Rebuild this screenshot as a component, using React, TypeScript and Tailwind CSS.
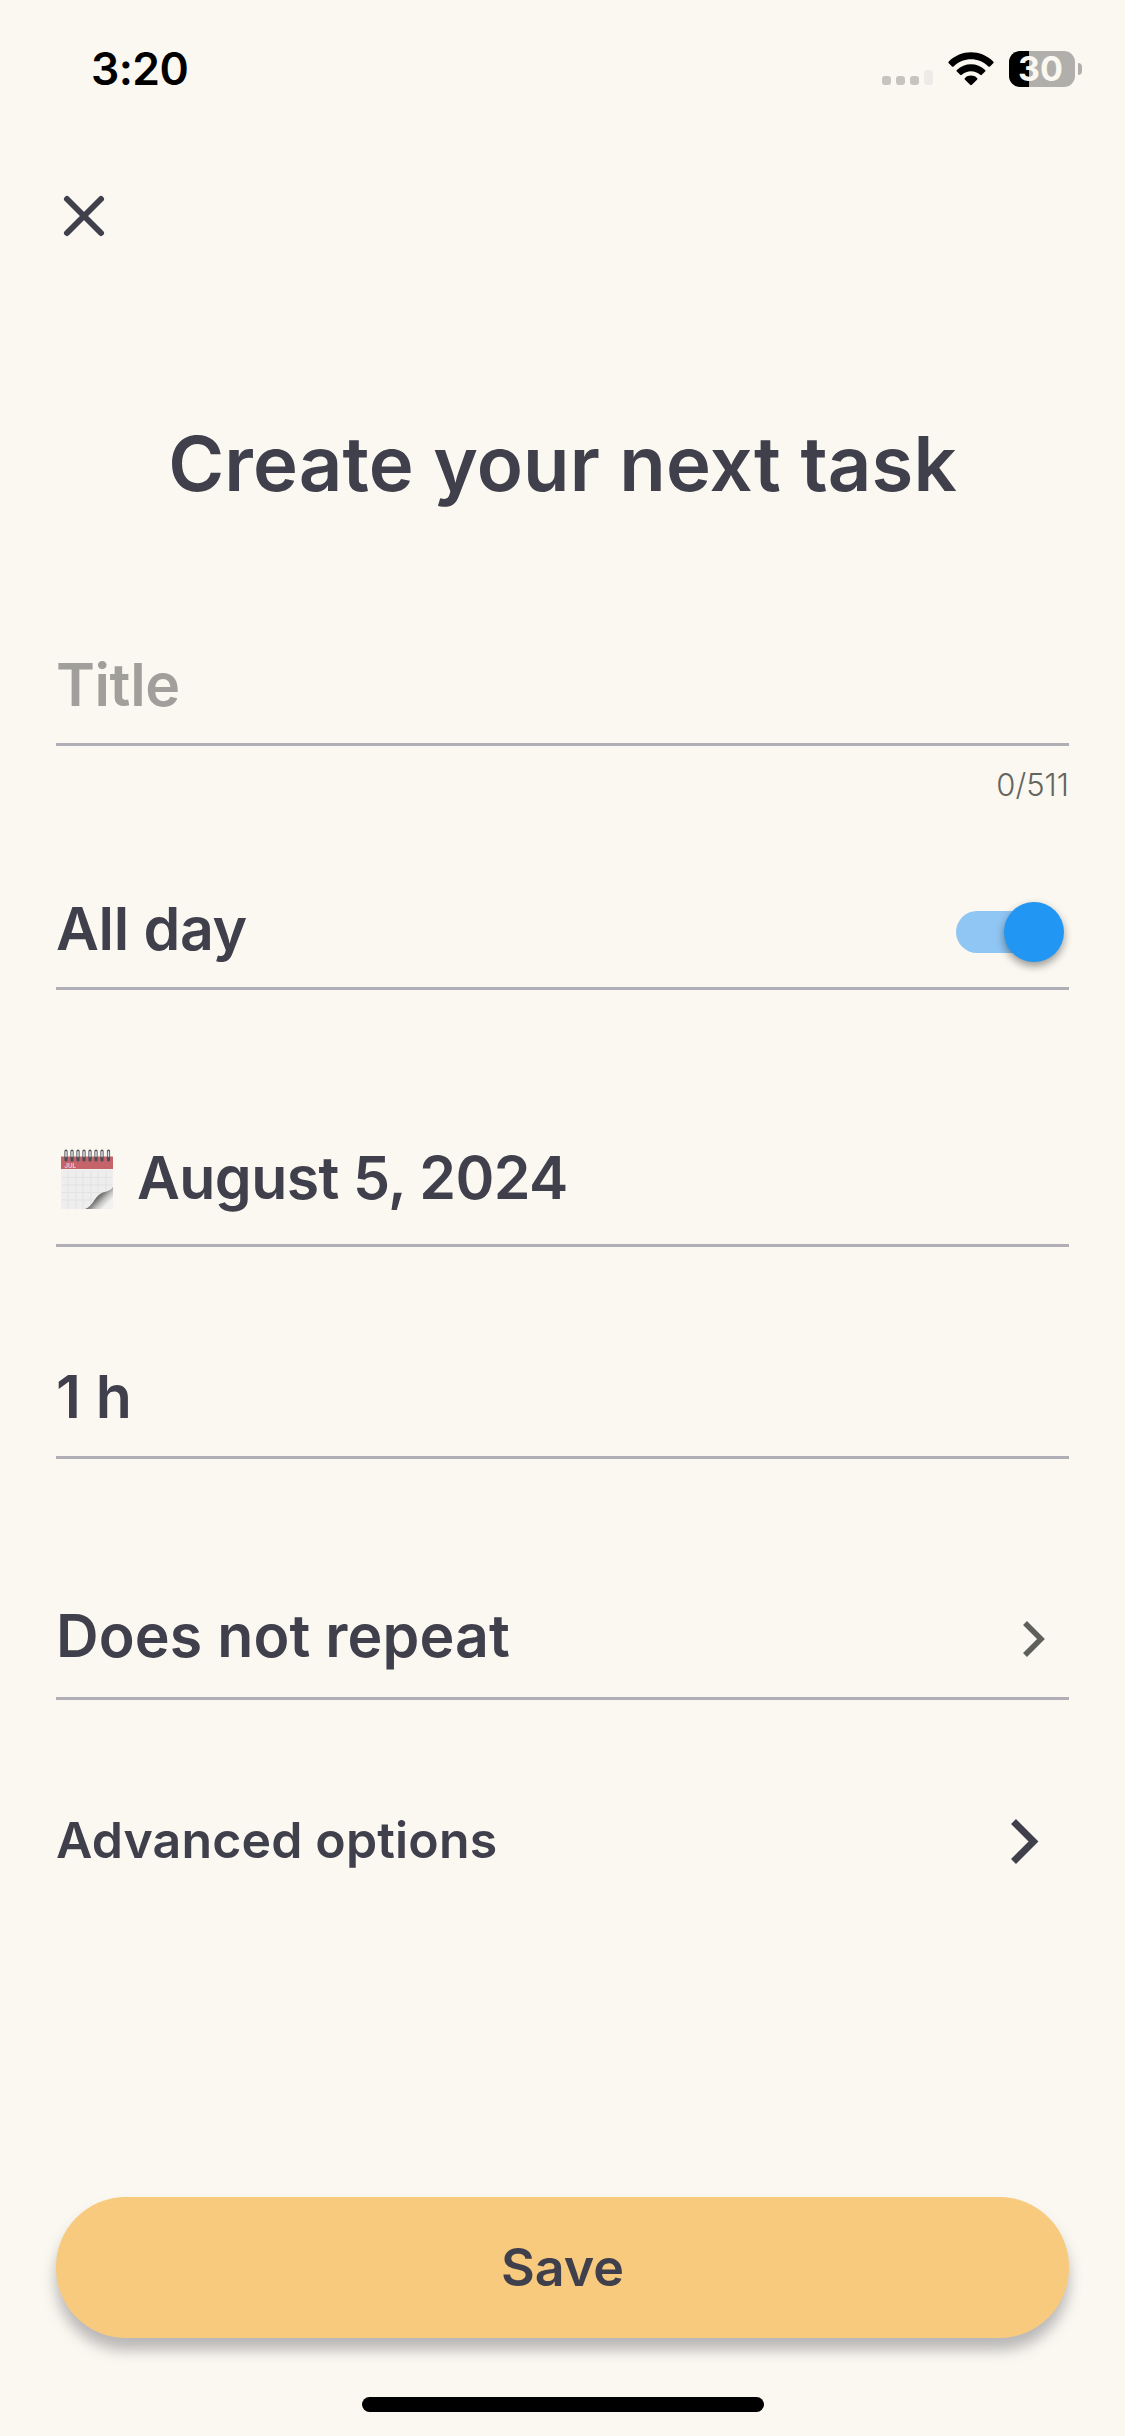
import type { ReactNode } from 'react'

function StatusBar() {
  return (
    <div className="flex h-[120px] items-start justify-between pl-[91px] pr-[43px] pt-[39px] text-black">
      <span className="text-[44.5px] font-semibold leading-[60px] tracking-[-0.6px]">3:20</span>
      <div className="mt-[12px] flex h-[36px] items-center">
        {/* Cell signal */}
        <svg className="mt-[17px] mr-[15px] h-[15px] w-[51px]" viewBox="0 0 51 15">
          <rect x="0" y="6" width="9" height="9" rx="3" fill="#c6c4bf" />
          <rect x="14" y="6" width="9" height="9" rx="3" fill="#c6c4bf" />
          <rect x="28" y="6" width="9" height="9" rx="3" fill="#c6c4bf" />
          <rect x="42" y="0" width="9" height="15" rx="3" fill="#ecebe7" />
        </svg>
        {/* Wifi */}
        <svg className="mr-[15px] h-[34px] w-[46px]" viewBox="0 0 46 34">
          <path d="M0.8 9.6C13 -2.8 33 -2.8 45.2 9.6c.6.6.6 1.1 0 1.7l-3.2 3.1c-.6.6-1.1.5-1.6 0C30.5 5 15.5 5 5.6 14.4c-.5.5-1 .6-1.6 0L.8 11.3c-.6-.6-.6-1.1 0-1.7z" />
          <path d="M8.9 17.9C16.6 10.2 29.4 10.2 37.1 17.9c.6.6.6 1.1 0 1.7l-3.3 3.2c-.5.5-1 .5-1.6 0-5.2-4.9-13.2-4.9-18.4 0-.6.5-1.1.5-1.6 0l-3.3-3.2c-.6-.6-.6-1.1 0-1.7z" />
          <path d="M17 26c3.3-3.2 8.7-3.2 12 0 .6.6.6 1.1 0 1.7l-5.1 5c-.6.6-1.2.6-1.8 0l-5.1-5c-.6-.6-.6-1.1 0-1.7z" />
        </svg>
        {/* Battery */}
        <div className="flex h-[36px] w-[66px] items-center justify-center rounded-[11px] bg-[linear-gradient(to_right,#000_20px,#b1afab_20px)] pr-[3px] text-[34px] font-bold leading-[36px] text-[#fbf8f1]">
          30
        </div>
        <div className="ml-[3px] h-[12px] w-[4px] rounded-r-full bg-[#b1afab]" />
      </div>
    </div>
  )
}

function CalendarIcon() {
  const rings = [5, 11, 17, 23, 29, 35, 41, 47.5]
  return (
    <svg className="mr-[24px] mb-[-1px] h-[60px] w-[52px]" viewBox="0 0 52 60">
      <defs>
        <linearGradient id="curl" x1="33" y1="43" x2="48" y2="58" gradientUnits="userSpaceOnUse">
          <stop offset="0.05" stopColor="#dededd" />
          <stop offset="0.3" stopColor="#6b6b6a" />
          <stop offset="0.6" stopColor="#c4c4c3" />
          <stop offset="0.85" stopColor="#f1f1f0" />
        </linearGradient>
      </defs>
      <rect y="20" width="52" height="40" fill="#efeeee" />
      <rect y="7.5" width="52" height="12.5" fill="#c4636a" />
      <path d="M7 22v38M15 22v38M22 22v38M30 22v38M37 22v38M45 22v38M1 28.5h50M1 36h50M1 43.5h50M1 51h50" stroke="#e3e2e3" />
      <path d="M24 60C32 57 33 49 39 45C44 42 49 43 52 38V60Z" fill="url(#curl)" />
      {rings.map((x) => (
        <g key={x}>
          <rect x={x - 1.6} y="0.5" width="3.2" height="12" rx="1.6" fill="#4e4f56" />
          <rect x={x - 0.8} y="2" width="1.6" height="6" rx="0.8" fill="#d8dadd" />
        </g>
      ))}
      <text x="3.5" y="18.5" fontSize="6" fill="#f3d5d5">JUL</text>
    </svg>
  )
}

function Row({ className, children }: { className: string; children: ReactNode }) {
  return (
    <div className={`flex items-end border-b-[3px] border-[#b0aeb6] text-[59px] font-semibold leading-[60px] ${className}`}>
      {children}
    </div>
  )
}

export default function App() {
  return (
    <div className="flex h-[2436px] w-[1125px] flex-col bg-[#fbf8f1] font-['Inter',sans-serif] text-[#40404c]">
      <StatusBar />

      <button className="ml-[62px] mt-[74px] h-[44px] w-[44px]" aria-label="Close">
        <svg viewBox="0 0 44 44" fill="none" stroke="currentColor" strokeWidth="6" strokeLinecap="round">
          <path d="M5 5l34 34M39 5L5 39" />
        </svg>
      </button>

      <h1 className="mt-[175px] text-center text-[76px] font-semibold leading-[100px] tracking-[0.15px]">Create your next task</h1>

      <main className="flex flex-col px-[56px]">
        <Row className="h-[233px] pb-[28px]">
          <span className="tracking-[-0.4px] text-[#a09f9b]">Title</span>
        </Row>
        <p className="mt-[21px] h-[36px] text-right text-[31px] font-light leading-[36px] text-[#656560]">0/511</p>

        <Row className="h-[187px] justify-between pb-[28px]">
          <span className="tracking-[-0.3px]">All day</span>
          <span className="mb-[-3px] mr-[4px] flex h-[60px] w-[109px] items-center">
            <span className="h-[42px] w-[99px] shrink-0 rounded-full bg-[#90c6f4]" />
            <span className="ml-[-51px] h-[60px] w-[60px] shrink-0 rounded-full bg-[#2296f3] shadow-[0_4px_8px_rgba(0,0,0,0.4)]" />
          </span>
        </Row>

        <Row className="h-[257px] pb-[36px] pl-[5px]">
          <CalendarIcon />
          <span className="tracking-[-0.6px]">August 5, 2024</span>
        </Row>

        <Row className="h-[212px] pb-[29px]">
          <span>1 h</span>
        </Row>

        <Row className="h-[241px] justify-between pb-[31px]">
          <span className="tracking-[0.1px]">Does not repeat</span>
          <svg className="mb-[9px] mr-[24px] h-[36px] w-[22px]" viewBox="0 0 22 36" fill="none" stroke="#60605b" strokeWidth="5.5">
            <path d="M2 2l16 16L2 34" />
          </svg>
        </Row>

        <div className="mt-[109px] flex h-[64px] items-center justify-between pr-[30px] text-[50px] font-semibold leading-[64px]">
          <span className="mt-[-2px] tracking-[0.15px]">Advanced options</span>
          <svg className="h-[45px] w-[28px]" viewBox="0 0 28 45" fill="none" stroke="currentColor" strokeWidth="7">
            <path d="M2.5 2.5l20 20l-20 20" />
          </svg>
        </div>

        <button className="mt-[324px] h-[141px] rounded-[70px] bg-[#f8ca7e] text-[52px] font-semibold shadow-[0_12px_14px_rgba(64,64,76,0.35)]">
          Save
        </button>
      </main>

      <div className="mx-auto mt-[59px] h-[15px] w-[402px] rounded-full bg-black" />
    </div>
  )
}
